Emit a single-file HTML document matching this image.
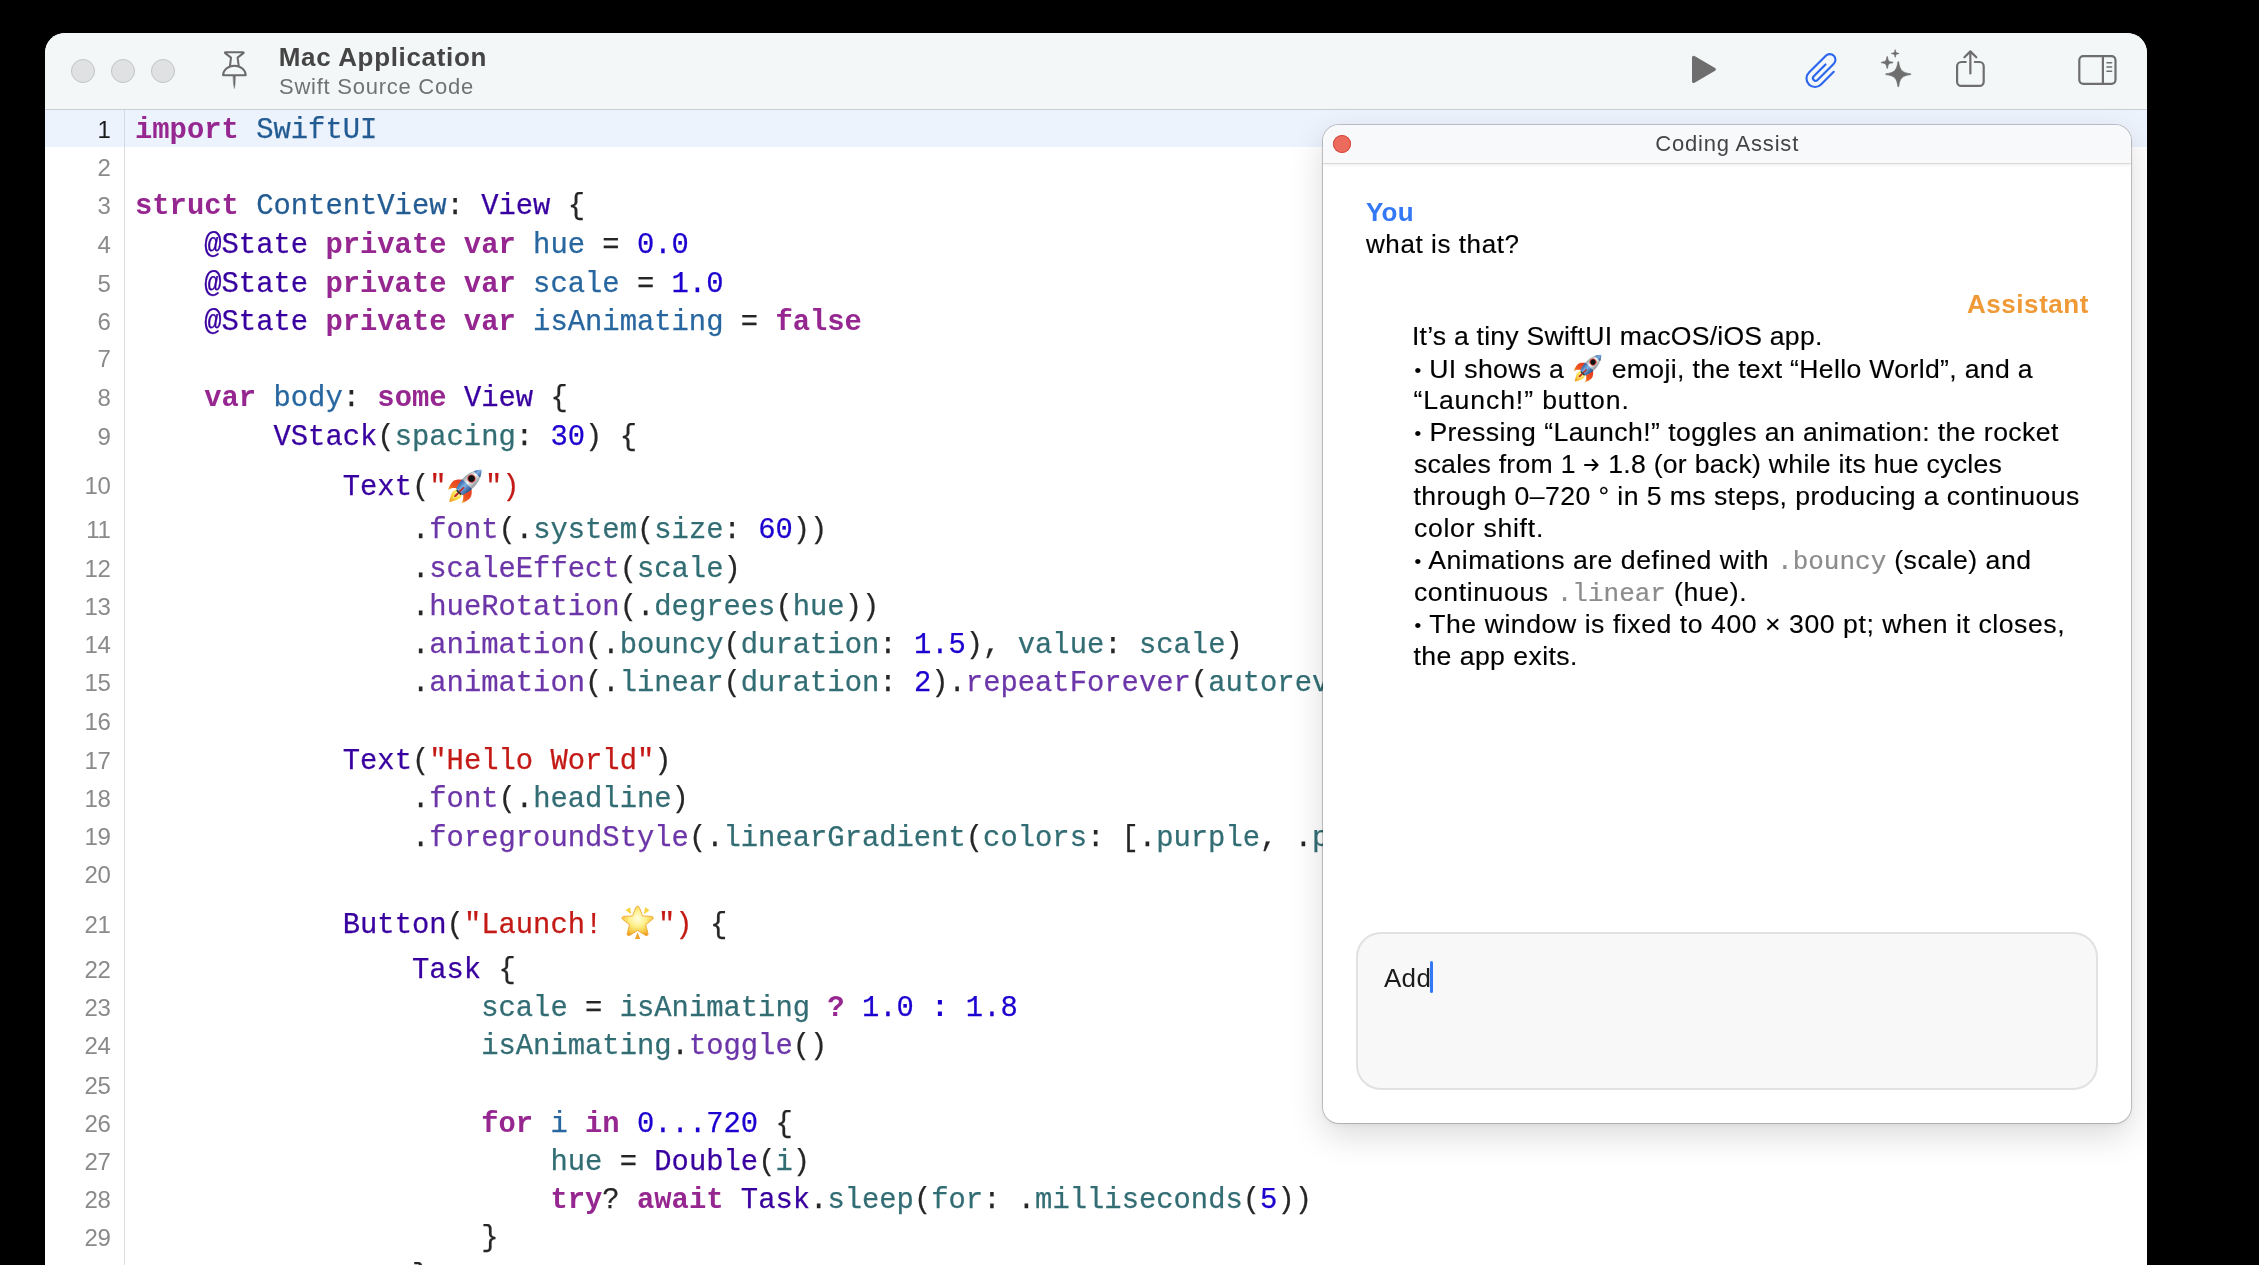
<!DOCTYPE html>
<html><head><meta charset="utf-8"><title>Mac Application</title>
<style>
html,body{margin:0;padding:0;background:#000;}
body{width:2259px;height:1265px;overflow:hidden;position:relative;font-family:"Liberation Sans",sans-serif;}
#win{position:absolute;left:45px;top:33px;width:2102px;height:1300px;background:#fff;border-radius:20px 20px 0 0;overflow:hidden;}
#page{will-change:transform;position:absolute;left:-45px;top:-33px;width:2259px;height:1300px;}
#tb{position:absolute;left:45px;top:33px;width:2102px;height:76px;background:#f4f7f8;border-bottom:1px solid #c9ced6;}
.tl{position:absolute;top:59px;width:22px;height:22px;border-radius:50%;background:#dfe1e2;border:1px solid #c2c4c5;}
#title{position:absolute;left:278.70px;top:41px;font-weight:bold;font-size:26px;line-height:32px;color:#454545;white-space:nowrap;letter-spacing:0.664px}
#sub{position:absolute;left:279.00px;top:73px;font-size:22px;line-height:28px;color:#6f7374;white-space:nowrap;letter-spacing:0.750px}
#hl{position:absolute;left:45px;top:110px;width:2102px;height:37px;background:#edf3fd;}
#gut{position:absolute;left:124px;top:110px;width:1px;height:1200px;background:#dcdcdc;}
#guthl{position:absolute;left:124px;top:110px;width:1px;height:37px;background:#d3d9e6;}
.ln{position:absolute;left:44.5px;width:66px;height:40px;line-height:40px;text-align:right;font-size:24px;color:#8a8a8a;letter-spacing:-0.3px}
.ln.cur{color:#1a1a1a}
.cl{-webkit-text-stroke:0.25px currentColor;position:absolute;height:40px;line-height:40px;font-family:"Liberation Mono",monospace;font-size:28.85px;white-space:pre;color:#262626;letter-spacing:-0.0028px}
.cl span{display:inline-block;}
.k{color:#962791;font-weight:bold;-webkit-text-stroke:0} .t{color:#235c93} .d{color:#27669f} .c{color:#3900a0} .n{color:#1c00cf} .nb{color:#1c00cf;font-weight:bold;-webkit-text-stroke:0}
.s{color:#c41a16} .f{color:#6c36a9} .v{color:#326d74} .p{color:#262626}
.em{display:inline-block;vertical-align:middle;width:38.4px;height:38.4px;margin-top:-4px}
#panel{position:absolute;left:1323px;top:125px;width:808px;height:998px;background:#fff;border-radius:16px;box-shadow:0 0 0 1px rgba(0,0,0,0.20),0 12px 34px rgba(0,0,0,0.15),0 2px 5px rgba(0,0,0,0.06);overflow:hidden;}
#ptb{position:absolute;left:0;top:0;width:100%;height:38px;background:#f8f9fb;border-bottom:1px solid #d9d9d9;box-shadow:0 1px 3px rgba(0,0,0,0.08)}
#pclose{position:absolute;left:10px;top:10px;width:18px;height:18px;border-radius:50%;background:#ed6a5e;box-shadow:inset 0 0 0 1px #d5493c;}
#ptitle{position:absolute;left:332.20px;top:4.5px;white-space:nowrap;font-size:22px;line-height:28px;color:#444;letter-spacing:0.817px}
.ct{-webkit-text-stroke:0.15px #000;position:absolute;font-size:26.6px;line-height:32px;height:32px;color:#000;white-space:nowrap}
.bu{font-size:19px;position:relative;top:-1px}
.mc{-webkit-text-stroke:0.2px #8c8c8c;font-family:"Liberation Mono",monospace;font-size:26px;color:#8c8c8c;letter-spacing:0}
.ar{display:inline-block;vertical-align:1px;margin:0 1px}
.em2{display:inline-block;vertical-align:-6px;margin:0 0px}
#you{position:absolute;left:1365.90px;top:195.8px;font-weight:bold;font-size:26px;line-height:32px;color:#3478f6;letter-spacing:0.250px}
#q{-webkit-text-stroke:0.15px #000;position:absolute;left:1366.00px;top:228.0px;font-size:26px;line-height:32px;color:#000;white-space:nowrap;letter-spacing:0.583px}
#asst{position:absolute;left:1967.00px;top:287.5px;font-weight:bold;font-size:26px;line-height:32px;color:#f09a37;white-space:nowrap;letter-spacing:0.550px}
#inp{box-sizing:border-box;position:absolute;left:1356px;top:931.5px;width:742px;height:158px;border-radius:25px;background:#f8f8f8;border:2px solid #e1e1e1;}
#add{position:absolute;left:1383.90px;top:960.6px;font-size:26px;line-height:34px;color:#1c1c1c;letter-spacing:0.350px}
#caret{position:absolute;left:1429.5px;top:961.2px;width:3.8px;height:31.6px;border-radius:2px;background:#3478f6}
.ic{position:absolute;overflow:visible}
</style></head><body>
<svg width="0" height="0" style="position:absolute">
<defs>
<linearGradient id="rb" x1="0" y1="0" x2="1" y2="0"><stop offset="0" stop-color="#9aa2a8"/><stop offset="0.45" stop-color="#f4f6f7"/><stop offset="1" stop-color="#8d959b"/></linearGradient>
<linearGradient id="rbl" x1="0" y1="0" x2="1" y2="0"><stop offset="0" stop-color="#2f5f9e"/><stop offset="0.45" stop-color="#7fb0e4"/><stop offset="1" stop-color="#244c86"/></linearGradient>
<linearGradient id="rfl" x1="0" y1="0" x2="0" y2="1"><stop offset="0" stop-color="#fff27a"/><stop offset="0.55" stop-color="#fbd43a"/><stop offset="1" stop-color="#f08a1c"/></linearGradient>
<linearGradient id="rfin" x1="0" y1="0" x2="0" y2="1"><stop offset="0" stop-color="#e8311f"/><stop offset="0.7" stop-color="#ee5a1f"/><stop offset="1" stop-color="#f7b52c"/></linearGradient>
<radialGradient id="sg" cx="0.5" cy="0.42" r="0.6"><stop offset="0" stop-color="#fffde0"/><stop offset="0.45" stop-color="#fdf08a"/><stop offset="0.8" stop-color="#f7c843"/><stop offset="1" stop-color="#ee9d2a"/></radialGradient>
<g id="rocket"><g transform="rotate(45)">
 <path d="M-3.6 8 C-5.6 11 -5.2 14.5 -3.4 17 C-2.4 19.5 -1 21.3 0 22.8 C1 21.3 2.4 19.5 3.4 17 C5.2 14.5 5.6 11 3.6 8 Z" fill="url(#rfl)"/>
 <path d="M-1.6 8.5 C-2.4 11 -2 13.5 -1 15.5 L0 18 L1 15.5 C2 13.5 2.4 11 1.6 8.5 Z" fill="#fff59a"/>
 <path d="M-6 -2.4 C-9 -0.5 -11.4 2.4 -12 5.2 C-12 9 -11 12 -9.6 15 C-8.6 11.5 -6.8 9 -4.2 7.8 Z" fill="url(#rfin)"/>
 <path d="M6 -2.4 C9 -0.5 11.4 2.4 12 5.2 C12 9 11 12 9.6 15 C8.6 11.5 6.8 9 4.2 7.8 Z" fill="url(#rfin)"/>
 <path d="M0 -22.8 C5.5 -17.5 7.6 -9.5 6.8 -1.5 C6.4 2.6 5.6 5.8 4.4 8.6 L-4.4 8.6 C-5.6 5.8 -6.4 2.6 -6.8 -1.5 C-7.6 -9.5 -5.5 -17.5 0 -22.8 Z" fill="url(#rb)"/>
 <path d="M0 -22.8 C2 -20.8 3.4 -18.6 4.5 -16.2 L-4.5 -16.2 C-3.4 -18.6 -2 -20.8 0 -22.8 Z" fill="url(#rbl)"/>
 <path d="M6.85 -2.4 C6.5 2 5.5 5.8 4.4 8.6 L-4.4 8.6 C-5.5 5.8 -6.5 2 -6.85 -2.4 Z" fill="url(#rbl)"/>
 <circle cx="-0.8" cy="-9.4" r="4.2" fill="#e23a2c"/>
 <circle cx="-0.8" cy="-9.4" r="3.2" fill="#0d1418"/>
 <path d="M-0.7 2 L0.7 2 L1.2 14 L0 16.5 L-1.2 14 Z" fill="#c5281c"/>
 <rect x="-3.2" y="8.2" width="6.4" height="1.8" fill="#2b3a44"/>
</g></g>
<g id="gstar">
 <path d="M0 -16.3 C0.9 -16.3 1.5 -15.7 1.9 -14.8 L5.0 -6.6 L14.0 -6.1 C15.6 -6 16.2 -4.2 15.0 -3.2 L8.1 2.3 L10.4 11.1 C10.8 12.6 9.3 13.7 8.0 12.9 L0 7.9 L-8.0 12.9 C-9.3 13.7 -10.8 12.6 -10.4 11.1 L-8.1 2.3 L-15.0 -3.2 C-16.2 -4.2 -15.6 -6 -14.0 -6.1 L-5.0 -6.6 L-1.9 -14.8 C-1.5 -15.7 -0.9 -16.3 0 -16.3 Z" fill="url(#sg)" stroke="#f0a530" stroke-width="0.9"/>
 <path d="M-12 -12.2 L-7.6 -15.2 L-6.2 -8.2 Z" fill="#f6d23c"/>
 <path d="M12 -12.2 L7.6 -15.2 L6.2 -8.2 Z" fill="#f6d23c"/>
 <path d="M0 9.8 L2.6 16.6 L-2.6 16.6 Z" fill="#f0a22c"/>
</g>
</defs></svg>
<div id="win"><div id="page">
<div id="tb"></div>
<div class="tl" style="left:71px"></div><div class="tl" style="left:111px"></div><div class="tl" style="left:151px"></div>
<!-- pin -->
<svg class="ic" style="left:220px;top:48px" width="30" height="44" viewBox="220 48 30 44" fill="none" stroke="#6b6b6b" stroke-width="2.05" stroke-linecap="round" stroke-linejoin="round">
<path d="M230.0 65.9 L231.0 57.6 L225.2 53.1 Q224.4 52.15 225.7 52.15 H242.9 Q244.2 52.15 243.4 53.1 L237.6 57.6 L238.7 65.9"/>
<path d="M223.1 75.25 A11.3 9.55 0 0 1 245.7 75.25 Z"/>
<path d="M233.2 76 L235.4 76 L235.1 84 L234.3 88.6 L233.5 84 Z" fill="#6b6b6b" stroke-width="0.4"/>
</svg>
<div id="title">Mac Application</div>
<div id="sub">Swift Source Code</div>
<!-- play -->
<svg class="ic" style="left:1688px;top:52px" width="32" height="36" viewBox="1688 52 32 36"><path d="M1693.7 57.5 L1714.2 69.4 L1693.7 81.3 Z" fill="#6e6e6e" stroke="#6e6e6e" stroke-width="3.4" stroke-linejoin="round"/></svg>
<!-- paperclip -->
<svg class="ic" style="left:1800px;top:48px" width="44" height="44" viewBox="1800 48 44 44" fill="none" stroke="#2a66ee" stroke-width="2.15" stroke-linecap="round" stroke-linejoin="round">
<g transform="translate(1816.76 64.76) rotate(-45)"><path d="M6.4 5.96 L-10.2 5.96 A2.67 2.67 0 0 0 -10.2 11.3 L12.8 11.3 A5.65 5.65 0 0 0 12.8 0 L-11.0 0 A8.5 8.5 0 0 0 -11.0 17 L7 17"/></g>
</svg>
<!-- sparkles -->
<svg class="ic" style="left:1876px;top:46px" width="40" height="46" viewBox="1876 46 40 46" fill="#6e6e6e" stroke="#6e6e6e" stroke-width="0.7" stroke-linejoin="round">
<path d="M1897.95 61.70 L1898.65 61.70 C1899.90 70.45 1902.05 72.60 1910.80 73.85 L1910.80 74.55 C1902.05 75.80 1899.90 77.95 1898.65 86.70 L1897.95 86.70 C1896.70 77.95 1894.55 75.80 1885.80 74.55 L1885.80 73.85 C1894.55 72.60 1896.70 70.45 1897.95 61.70 Z"/>
<path d="M1886.90 56.70 L1887.50 56.70 C1888.10 60.99 1888.71 61.60 1893.00 62.20 L1893.00 62.80 C1888.71 63.40 1888.10 64.01 1887.50 68.30 L1886.90 68.30 C1886.30 64.01 1885.69 63.40 1881.40 62.80 L1881.40 62.20 C1885.69 61.60 1886.30 60.99 1886.90 56.70 Z"/>
<path d="M1894.95 49.80 L1895.45 49.80 C1895.80 52.54 1896.16 52.90 1898.90 53.25 L1898.90 53.75 C1896.16 54.10 1895.80 54.46 1895.45 57.20 L1894.95 57.20 C1894.60 54.46 1894.24 54.10 1891.50 53.75 L1891.50 53.25 C1894.24 52.90 1894.60 52.54 1894.95 49.80 Z" stroke-width="0.5"/>
</svg>
<!-- share -->
<svg class="ic" style="left:1950px;top:46px" width="40" height="46" viewBox="1950 46 40 46" fill="none" stroke="#6e6e6e" stroke-width="2.2" stroke-linecap="round" stroke-linejoin="round">
<path d="M1965.8 62 H1961.3 A4.2 4.2 0 0 0 1957.1 66.2 V81.7 A4.2 4.2 0 0 0 1961.3 85.9 H1979.5 A4.2 4.2 0 0 0 1983.7 81.7 V66.2 A4.2 4.2 0 0 0 1979.5 62 H1974.9"/>
<path d="M1970.35 51.8 V73.4 M1964.4 57.3 L1970.35 51.35 L1976.3 57.3"/>
</svg>
<!-- sidebar -->
<svg class="ic" style="left:2074px;top:50px" width="48" height="40" viewBox="2074 50 48 40" fill="none" stroke="#6e6e6e" stroke-width="2.2" stroke-linecap="round" stroke-linejoin="round">
<rect x="2079.3" y="56.2" width="36.2" height="27.6" rx="4"/>
<path d="M2102.9 56.4 V83.6"/>
<path d="M2107 62.8 H2111.6 M2107 67 H2111.6 M2107 71.2 H2111.6" stroke-width="1.6"/>
</svg>
<div id="hl"></div><div id="gut"></div><div id="guthl"></div>
<div class="ln cur" style="top:109.90px">1</div>
<div class="cl" style="top:111.02px;left:135.00px"><span class="k">import</span><span class="p"> </span><span class="t">SwiftUI</span></div>
<div class="ln" style="top:147.80px">2</div>
<div class="ln" style="top:185.70px">3</div>
<div class="cl" style="top:186.82px;left:135.00px"><span class="k">struct</span><span class="p"> </span><span class="t">ContentView</span><span class="p">: </span><span class="c">View</span><span class="p"> {</span></div>
<div class="ln" style="top:225.30px">4</div>
<div class="cl" style="top:226.42px;left:204.24px"><span class="c">@State</span><span class="p"> </span><span class="k">private</span><span class="p"> </span><span class="k">var</span><span class="p"> </span><span class="d">hue</span><span class="p"> = </span><span class="n">0.0</span></div>
<div class="ln" style="top:263.50px">5</div>
<div class="cl" style="top:264.62px;left:204.24px"><span class="c">@State</span><span class="p"> </span><span class="k">private</span><span class="p"> </span><span class="k">var</span><span class="p"> </span><span class="d">scale</span><span class="p"> = </span><span class="n">1.0</span></div>
<div class="ln" style="top:301.50px">6</div>
<div class="cl" style="top:302.62px;left:204.24px"><span class="c">@State</span><span class="p"> </span><span class="k">private</span><span class="p"> </span><span class="k">var</span><span class="p"> </span><span class="d">isAnimating</span><span class="p"> = </span><span class="k">false</span></div>
<div class="ln" style="top:339.40px">7</div>
<div class="ln" style="top:377.50px">8</div>
<div class="cl" style="top:378.62px;left:204.24px"><span class="k">var</span><span class="p"> </span><span class="d">body</span><span class="p">: </span><span class="k">some</span><span class="p"> </span><span class="c">View</span><span class="p"> {</span></div>
<div class="ln" style="top:416.90px">9</div>
<div class="cl" style="top:418.02px;left:273.48px"><span class="c">VStack</span><span class="p">(</span><span class="v">spacing</span><span class="p">: </span><span class="n">30</span><span class="p">) {</span></div>
<div class="ln" style="top:465.90px">10</div>
<div class="cl" style="top:467.92px;left:342.72px"><span class="c">Text</span><span class="p">(</span><span class="s">"</span><svg class="em" viewBox="-18.4 -19.85 38.4 38.4" width="38.4" height="38.4"><use href="#rocket"/></svg><span class="s">")</span></div>
<div class="ln" style="top:509.70px">11</div>
<div class="cl" style="top:510.82px;left:411.96px"><span class="p">.</span><span class="f">font</span><span class="p">(.</span><span class="v">system</span><span class="p">(</span><span class="v">size</span><span class="p">: </span><span class="n">60</span><span class="p">))</span></div>
<div class="ln" style="top:549.20px">12</div>
<div class="cl" style="top:550.32px;left:411.96px"><span class="p">.</span><span class="f">scaleEffect</span><span class="p">(</span><span class="v">scale</span><span class="p">)</span></div>
<div class="ln" style="top:587.30px">13</div>
<div class="cl" style="top:588.42px;left:411.96px"><span class="p">.</span><span class="f">hueRotation</span><span class="p">(.</span><span class="v">degrees</span><span class="p">(</span><span class="v">hue</span><span class="p">))</span></div>
<div class="ln" style="top:625.10px">14</div>
<div class="cl" style="top:626.22px;left:411.96px"><span class="p">.</span><span class="f">animation</span><span class="p">(.</span><span class="v">bouncy</span><span class="p">(</span><span class="v">duration</span><span class="p">: </span><span class="n">1.5</span><span class="p">), </span><span class="v">value</span><span class="p">: </span><span class="v">scale</span><span class="p">)</span></div>
<div class="ln" style="top:663.20px">15</div>
<div class="cl" style="top:664.32px;left:411.96px"><span class="p">.</span><span class="f">animation</span><span class="p">(.</span><span class="v">linear</span><span class="p">(</span><span class="v">duration</span><span class="p">: </span><span class="n">2</span><span class="p">).</span><span class="f">repeatForever</span><span class="p">(</span><span class="v">autorever</span></div>
<div class="ln" style="top:701.50px">16</div>
<div class="ln" style="top:741.00px">17</div>
<div class="cl" style="top:742.12px;left:342.72px"><span class="c">Text</span><span class="p">(</span><span class="s">"Hello World"</span><span class="p">)</span></div>
<div class="ln" style="top:779.30px">18</div>
<div class="cl" style="top:780.42px;left:411.96px"><span class="p">.</span><span class="f">font</span><span class="p">(.</span><span class="v">headline</span><span class="p">)</span></div>
<div class="ln" style="top:817.40px">19</div>
<div class="cl" style="top:818.52px;left:411.96px"><span class="p">.</span><span class="f">foregroundStyle</span><span class="p">(.</span><span class="v">linearGradient</span><span class="p">(</span><span class="v">colors</span><span class="p">: [.</span><span class="v">purple</span><span class="p">, .</span><span class="v">pi</span></div>
<div class="ln" style="top:855.40px">20</div>
<div class="ln" style="top:904.60px">21</div>
<div class="cl" style="top:905.72px;left:342.72px"><span class="c">Button</span><span class="p">(</span><span class="s">"Launch! </span><svg class="em" viewBox="-17.6 -18.5 38.4 38.4" width="38.4" height="38.4"><use href="#gstar"/></svg><span class="s">")</span><span class="p"> {</span></div>
<div class="ln" style="top:949.50px">22</div>
<div class="cl" style="top:950.62px;left:411.96px"><span class="c">Task</span><span class="p"> {</span></div>
<div class="ln" style="top:987.90px">23</div>
<div class="cl" style="top:989.02px;left:481.20px"><span class="v">scale</span><span class="p"> = </span><span class="v">isAnimating</span><span class="p"> </span><span class="k">?</span><span class="p"> </span><span class="n">1.0</span><span class="p"> </span><span class="nb">:</span><span class="p"> </span><span class="n">1.8</span></div>
<div class="ln" style="top:1026.10px">24</div>
<div class="cl" style="top:1027.22px;left:481.20px"><span class="v">isAnimating</span><span class="p">.</span><span class="f">toggle</span><span class="p">()</span></div>
<div class="ln" style="top:1066.00px">25</div>
<div class="ln" style="top:1103.70px">26</div>
<div class="cl" style="top:1104.82px;left:481.20px"><span class="k">for</span><span class="p"> </span><span class="d">i</span><span class="p"> </span><span class="k">in</span><span class="p"> </span><span class="n">0...720</span><span class="p"> {</span></div>
<div class="ln" style="top:1142.10px">27</div>
<div class="cl" style="top:1143.22px;left:550.44px"><span class="v">hue</span><span class="p"> = </span><span class="c">Double</span><span class="p">(</span><span class="v">i</span><span class="p">)</span></div>
<div class="ln" style="top:1180.20px">28</div>
<div class="cl" style="top:1181.32px;left:550.44px"><span class="k">try</span><span class="p">? </span><span class="k">await</span><span class="p"> </span><span class="c">Task</span><span class="p">.</span><span class="v">sleep</span><span class="p">(</span><span class="v">for</span><span class="p">: .</span><span class="v">milliseconds</span><span class="p">(</span><span class="n">5</span><span class="p">))</span></div>
<div class="ln" style="top:1217.90px">29</div>
<div class="cl" style="top:1219.02px;left:481.20px"><span class="p">}</span></div>
<div class="ln" style="top:1256.10px">30</div>
<div class="cl" style="top:1257.22px;left:411.96px"><span class="p">}</span></div>
<div id="panel"><div id="ptb"></div><div id="pclose"></div><div id="ptitle">Coding Assist</div></div>
<div id="you">You</div>
<div id="q">what is that?</div>
<div id="asst">Assistant</div>
<div class="ct" id="c0" style="top:319.60px;left:1412.00px;letter-spacing:0.221px">It’s a tiny SwiftUI macOS/iOS app.</div>
<div class="ct" id="c1" style="top:351.60px;left:1414.50px;letter-spacing:0.343px"><span class=bu>•</span> UI shows a <svg class="em2" viewBox="-19.4 -19.4 38.8 38.8" width="32" height="32"><use href="#rocket"/></svg> emoji, the text “Hello World”, and a</div>
<div class="ct" id="c2" style="top:383.60px;left:1413.50px;letter-spacing:0.894px">“Launch!” button.</div>
<div class="ct" id="c3" style="top:415.60px;left:1414.50px;letter-spacing:0.429px"><span class=bu>•</span> Pressing “Launch!” toggles an animation: the rocket</div>
<div class="ct" id="c4" style="top:447.60px;left:1413.90px;letter-spacing:0.288px">scales from 1 <svg class="ar" width="15" height="14" viewBox="0 0 15 14"><path d="M1 7 H13.5 M8.6 2 L13.6 7 L8.6 12" fill="none" stroke="#000" stroke-width="2" stroke-linecap="round" stroke-linejoin="round"/></svg> 1.8 (or back) while its hue cycles</div>
<div class="ct" id="c5" style="top:479.60px;left:1413.50px;letter-spacing:0.431px">through 0–720 ° in 5 ms steps, producing a continuous</div>
<div class="ct" id="c6" style="top:511.60px;left:1413.90px;letter-spacing:0.745px">color shift.</div>
<div class="ct" id="c7" style="top:543.60px;left:1414.50px;letter-spacing:0.529px"><span class=bu>•</span> Animations are defined with <span class=mc>.bouncy</span> (scale) and</div>
<div class="ct" id="c8" style="top:575.60px;left:1413.90px;letter-spacing:0.621px">continuous <span class=mc>.linear</span> (hue).</div>
<div class="ct" id="c9" style="top:607.60px;left:1414.50px;letter-spacing:0.560px"><span class=bu>•</span> The window is fixed to 400 × 300 pt; when it closes,</div>
<div class="ct" id="c10" style="top:639.60px;left:1413.50px;letter-spacing:0.446px">the app exits.</div>
<div id="inp"></div>
<div id="add">Add</div>
<div id="caret"></div>
</div></div>
</body></html>
